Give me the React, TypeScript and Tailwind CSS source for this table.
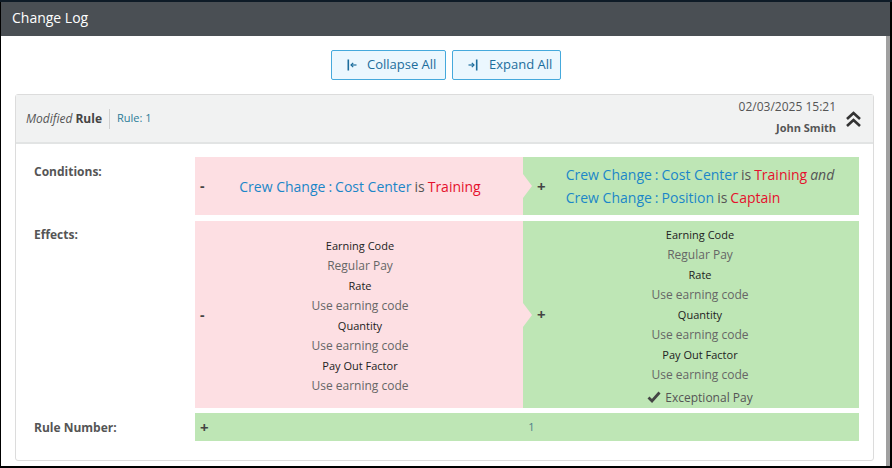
import React from "react";

const F = { fontFamily: '"Open Sans", "Noto Sans", sans-serif' };

function CollapseIcon() {
  return (
    <svg width="10" height="12" viewBox="0 0 10 12" className="shrink-0">
      <rect x="0.5" y="0.5" width="1.6" height="11" fill="#1c6d9c" />
      <path d="M4 6 L9.5 6" stroke="#1c6d9c" strokeWidth="1.2" />
      <path d="M6.2 3.8 L4 6 L6.2 8.2" stroke="#1c6d9c" strokeWidth="1.2" fill="none" />
    </svg>
  );
}

function ExpandIcon() {
  return (
    <svg width="10" height="12" viewBox="0 0 10 12" className="shrink-0">
      <rect x="7.9" y="0.5" width="1.6" height="11" fill="#1c6d9c" />
      <path d="M0.5 6 L6 6" stroke="#1c6d9c" strokeWidth="1.2" />
      <path d="M3.8 3.8 L6 6 L3.8 8.2" stroke="#1c6d9c" strokeWidth="1.2" fill="none" />
    </svg>
  );
}

function DoubleChevron() {
  return (
    <svg width="17" height="17" viewBox="0 0 17 17">
      <path d="M2 8 L8.5 2 L15 8" stroke="#333" strokeWidth="2.6" fill="none" strokeLinejoin="miter" />
      <path d="M2 15 L8.5 9 L15 15" stroke="#333" strokeWidth="2.6" fill="none" strokeLinejoin="miter" />
    </svg>
  );
}

function Check() {
  return (
    <svg width="14" height="12" viewBox="0 0 14 12" className="inline-block mr-[4px] -mt-[3px]">
      <path d="M1.5 6.5 L5 10 L12.5 1.5" stroke="#444" strokeWidth="2.8" fill="none" />
    </svg>
  );
}

const Blue = ({ children }: { children: React.ReactNode }) => (
  <span className="text-[#1b86c8]">{children}</span>
);
const Red = ({ children }: { children: React.ReactNode }) => (
  <span className="text-[#e5112d]">{children}</span>
);
const Is = () => <span className="text-[#555] mx-[3px]">is</span>;
const Colon = () => <span className="text-[#1b86c8] mx-[3px]">:</span>;

function EffectLines({ items, check }: { items: [string, string][]; check?: string }) {
  return (
    <div className="flex flex-col items-center">
      {items.map(([t, v], i) => (
        <React.Fragment key={i}>
          <div className="text-[11px] leading-[20px] text-[#222]">{t}</div>
          <div className="text-[12px] leading-[20px] text-[#666]">{v}</div>
        </React.Fragment>
      ))}
      {check && (
        <div className="text-[12px] leading-[24px] mt-[1px] text-[#555]">
          <Check />
          {check}
        </div>
      )}
    </div>
  );
}

function RedCell({ children }: { children: React.ReactNode }) {
  return (
    <div className="w-[328px] bg-[#fddfe3] flex items-center">
      <span className="ml-[5px] w-[8px] text-[14px] font-bold text-[#444] leading-none">-</span>
      <div className="flex-1 flex justify-center pr-[11px]">{children}</div>
    </div>
  );
}

function GreenCell({ children, arrow = true }: { children: React.ReactNode; arrow?: boolean }) {
  return (
    <div className="flex-1 bg-[#bee6b5] flex items-center relative">
      {arrow && (
        <div className="absolute left-0 top-1/2 -translate-y-1/2 w-0 h-0 border-y-[12px] border-y-transparent border-l-[9px] border-l-[#fddfe3]" />
      )}
      <span className="ml-[14px] w-[8px] text-[15px] font-bold text-[#444] leading-none">+</span>
      <div className="flex-1 flex justify-center ml-[5px] mr-[9px]">{children}</div>
    </div>
  );
}

const items: [string, string][] = [
  ["Earning Code", "Regular Pay"],
  ["Rate", "Use earning code"],
  ["Quantity", "Use earning code"],
  ["Pay Out Factor", "Use earning code"],
];

export default function App() {
  return (
    <div
      style={F}
      className="w-[892px] h-[468px] bg-black flex flex-col pl-px pb-[2px] border-t-2 border-[#0e1b27] overflow-hidden"
    >
      <div className="h-[34px] bg-[#4a4f54] text-white text-[14px] flex items-center pl-[11px] pb-[3px] mr-[2px] shrink-0">
        Change Log
      </div>
      <div className="flex-1 flex min-h-0 pr-[2px]">
        <div className="flex-1 bg-white flex flex-col">
          <div className="flex justify-center gap-[6px] pt-[14px] pl-[5px]">
            <button className="h-[30px] w-[115px] border border-[#45a9dc] bg-[#ebf7fe] rounded-[2px] flex items-center pl-[15px] gap-[10px] text-[13px] text-[#1c6d9c]">
              <CollapseIcon />
              <span>Collapse All</span>
            </button>
            <button className="h-[30px] w-[109px] border border-[#45a9dc] bg-[#ebf7fe] rounded-[2px] flex items-center pl-[15px] gap-[11px] text-[13px] text-[#1c6d9c]">
              <ExpandIcon />
              <span>Expand All</span>
            </button>
          </div>
          <div className="mt-[14px] ml-[14px] mr-[12px] border border-[#dcdcdc] rounded-[3px] flex flex-col">
            <div className="h-[49px] bg-[#f1f2f2] border-b-2 border-[#e2e4e4] flex items-center pl-[10px] pr-[11px]">
              <span className="text-[12px] italic text-[#555]">Modified</span>
              <span className="text-[12px] font-bold text-[#444] ml-[3px]">Rule</span>
              <span className="w-px h-[20px] bg-[#cfcfcf] mx-[7px]" />
              <span className="text-[11px] text-[#2b7c98]">Rule: 1</span>
              <div className="flex-1" />
              <div className="flex flex-col items-end pb-[5px]">
                <span className="text-[12px] text-[#555] leading-[20px]">02/03/2025 15:21</span>
                <span className="text-[11px] font-bold text-[#555] leading-[16px] mt-[3px]">John Smith</span>
              </div>
              <div className="ml-[9px] mt-[2px]">
                <DoubleChevron />
              </div>
            </div>
            <div className="pt-[13px] pb-[19px] pl-[18px] pr-[14px] flex flex-col gap-[6px]">
              <div className="flex">
                <div className="w-[161px] text-[12px] font-bold text-[#555] leading-[18px] pt-[6px]">
                  Conditions:
                </div>
                <div className="flex-1 flex h-[58px]">
                  <RedCell>
                    <div className="text-[14px] leading-[23px]">
                      <Blue>Crew Change</Blue>
                      <Colon />
                      <Blue>Cost Center</Blue>
                      <Is />
                      <Red>Training</Red>
                    </div>
                  </RedCell>
                  <GreenCell>
                    <div className="text-[14px] leading-[23px] text-left">
                      <div>
                        <Blue>Crew Change</Blue>
                        <Colon />
                        <Blue>Cost Center</Blue>
                        <Is />
                        <Red>Training</Red>
                        <span className="italic text-[#555] ml-[3px]">and</span>
                      </div>
                      <div>
                        <Blue>Crew Change</Blue>
                        <Colon />
                        <Blue>Position</Blue>
                        <Is />
                        <Red>Captain</Red>
                      </div>
                    </div>
                  </GreenCell>
                </div>
              </div>
              <div className="flex">
                <div className="w-[161px] text-[12px] font-bold text-[#555] leading-[18px] pt-[5px]">
                  Effects:
                </div>
                <div className="flex-1 flex h-[187px]">
                  <RedCell>
                    <div className="pt-[2px]">
                      <EffectLines items={items} />
                    </div>
                  </RedCell>
                  <GreenCell>
                    <div className="pt-[6px]">
                      <EffectLines items={items} check="Exceptional Pay" />
                    </div>
                  </GreenCell>
                </div>
              </div>
              <div className="flex -mt-px">
                <div className="w-[161px] text-[12px] font-bold text-[#555] leading-[18px] pt-[6px]">
                  Rule Number:
                </div>
                <div className="flex-1 flex h-[28px] bg-[#bee6b5] items-center">
                  <span className="ml-[5px] w-[8px] text-[15px] font-bold text-[#444] leading-none">+</span>
                  <div className="flex-1 text-center text-[11px] text-[#4d7f8a] pr-[4px]">1</div>
                </div>
              </div>
            </div>
          </div>
        </div>
        <div className="w-[4px] bg-[#a0a0a0]" />
      </div>
    </div>
  );
}
